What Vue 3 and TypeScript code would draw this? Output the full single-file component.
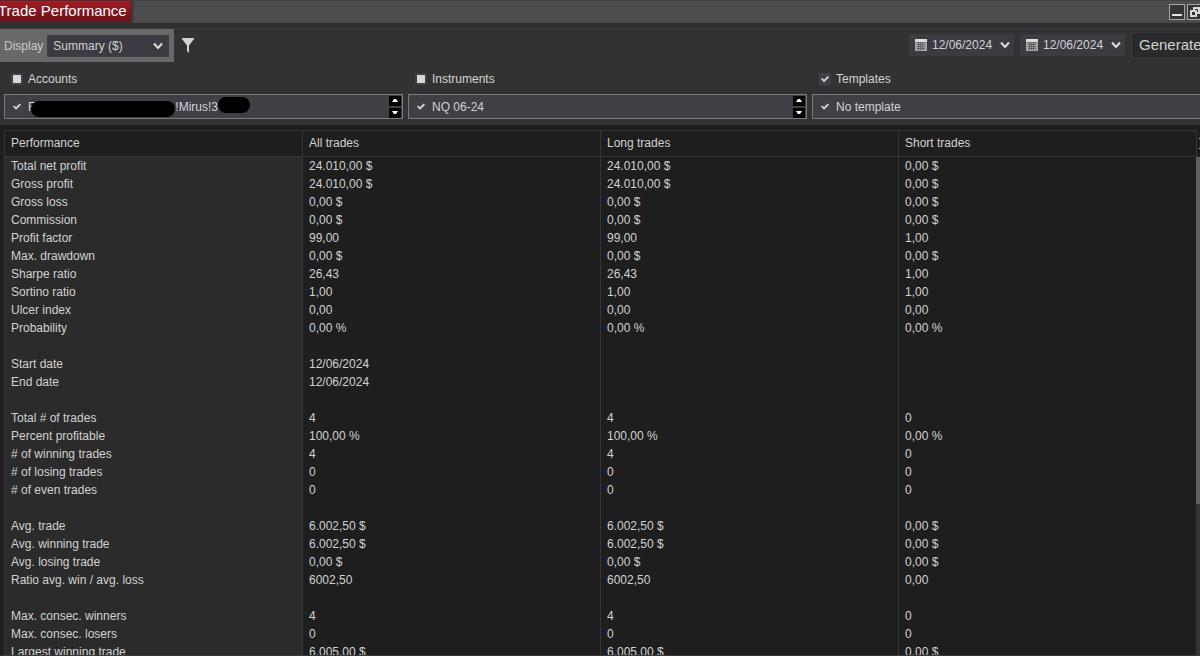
<script setup lang="ts">
import { ref } from 'vue'

interface Row {
  label: string
  all?: string
  long?: string
  short?: string
}

const display = ref('Summary ($)')
const dates = ref([
  { id: 'from', name: 'Start date', value: '12/06/2024' },
  { id: 'to', name: 'End date', value: '12/06/2024' },
])

const row = (label: string, all = '', long = '', short = ''): Row => ({ label, all, long, short })
const same = (label: string, value: string, short: string): Row => row(label, value, value, short)

const rows: Row[] = [
  same('Total net profit', '24.010,00 $', '0,00 $'),
  same('Gross profit', '24.010,00 $', '0,00 $'),
  same('Gross loss', '0,00 $', '0,00 $'),
  same('Commission', '0,00 $', '0,00 $'),
  same('Profit factor', '99,00', '1,00'),
  same('Max. drawdown', '0,00 $', '0,00 $'),
  same('Sharpe ratio', '26,43', '1,00'),
  same('Sortino ratio', '1,00', '1,00'),
  same('Ulcer index', '0,00', '0,00'),
  same('Probability', '0,00 %', '0,00 %'),
  row(''),
  row('Start date', '12/06/2024'),
  row('End date', '12/06/2024'),
  row(''),
  same('Total # of trades', '4', '0'),
  same('Percent profitable', '100,00 %', '0,00 %'),
  same('# of winning trades', '4', '0'),
  same('# of losing trades', '0', '0'),
  same('# of even trades', '0', '0'),
  row(''),
  same('Avg. trade', '6.002,50 $', '0,00 $'),
  same('Avg. winning trade', '6.002,50 $', '0,00 $'),
  same('Avg. losing trade', '0,00 $', '0,00 $'),
  same('Ratio avg. win / avg. loss', '6002,50', '0,00'),
  row(''),
  same('Max. consec. winners', '4', '0'),
  same('Max. consec. losers', '0', '0'),
  same('Largest winning trade', '6.005,00 $', '0,00 $'),
]
</script>

<template>
  <div class="window">
    <header class="titlebar">
      <h1 class="tab">Trade Performance</h1>
      <div class="window-buttons">
        <button type="button" aria-label="Minimize">
          <svg width="16" height="16" viewBox="0 0 16 16"><path d="M3 11h10" stroke="#e4e4e4" stroke-width="2" /></svg>
        </button>
        <button type="button" aria-label="Restore">
          <svg width="16" height="16" viewBox="0 0 16 16" fill="none" stroke="#d8d8d8" stroke-width="2">
            <path d="M7 7V4h5v5H9" /><rect x="4" y="7" width="5" height="5" />
          </svg>
        </button>
      </div>
    </header>

    <section class="controls">
      <div class="toolbar">
        <div class="display">
          <label for="display">Display</label>
          <div class="select">
            <select id="display" v-model="display">
              <option>Summary ($)</option>
            </select>
            <svg class="chevron" width="10" height="8" viewBox="0 0 10 8"><path d="M1 1.5 5 6 9 1.5" /></svg>
          </div>
        </div>
        <button class="filter" type="button" aria-label="Filter">
          <svg width="12" height="15" viewBox="0 0 12 15"><path d="M0 0h12v1L7 7.5V15L5 13V7.5L0 1z" fill="#d2d2d2" /></svg>
        </button>
        <div class="actions">
          <div v-for="date in dates" :key="date.id" class="date">
            <svg width="12" height="12" viewBox="0 0 12 12">
              <rect width="12" height="12" fill="#a2a29f" />
              <rect width="12" height="3" fill="#dededc" />
              <path d="M1 3.5h10M2 5.5h8M2 7.5h8M2 9.500h8M3.500 4v7M5.500 4v7M7.500 4v7" stroke="#46464c" stroke-opacity="0.6" />
            </svg>
            <input :id="date.id" v-model="date.value" type="text" :aria-label="date.name" />
            <button type="button" :aria-label="'Open ' + date.name">
              <svg class="chevron" width="10" height="8" viewBox="0 0 10 8"><path d="M1 1.5 5 6 9 1.5" /></svg>
            </button>
          </div>
          <button class="generate" type="button">Generate</button>
        </div>
      </div>

      <div class="filters">
        <div class="group">
          <label class="option"><input type="checkbox" class="partial" />Accounts</label>
          <div class="list">
            <label class="option">
              <input type="checkbox" checked />
              <span class="account">F<i class="redacted wide"></i>!Mirus!3<i class="redacted"></i></span>
            </label>
            <div class="stepper">
              <button type="button" aria-label="Previous account"><svg width="6" height="3" viewBox="0 0 6 3"><path d="M0 3 2 0h2l2 3z" fill="#fff" /></svg></button>
              <button type="button" aria-label="Next account"><svg width="6" height="3" viewBox="0 0 6 3"><path d="M0 0h6L4 3H2z" fill="#fff" /></svg></button>
            </div>
          </div>
        </div>
        <div class="group">
          <label class="option"><input type="checkbox" class="partial" />Instruments</label>
          <div class="list">
            <label class="option"><input type="checkbox" checked />NQ 06-24</label>
            <div class="stepper">
              <button type="button" aria-label="Previous instrument"><svg width="6" height="3" viewBox="0 0 6 3"><path d="M0 3 2 0h2l2 3z" fill="#fff" /></svg></button>
              <button type="button" aria-label="Next instrument"><svg width="6" height="3" viewBox="0 0 6 3"><path d="M0 0h6L4 3H2z" fill="#fff" /></svg></button>
            </div>
          </div>
        </div>
        <div class="group">
          <label class="option"><input type="checkbox" checked />Templates</label>
          <div class="list">
            <label class="option"><input type="checkbox" checked />No template</label>
          </div>
        </div>
      </div>
    </section>

    <main class="report">
      <table>
        <thead>
          <tr>
            <th scope="col">Performance</th>
            <th scope="col">All trades</th>
            <th scope="col">Long trades</th>
            <th scope="col">Short trades</th>
          </tr>
        </thead>
        <tbody>
          <tr v-for="(item, index) in rows" :key="index">
            <th scope="row">{{ item.label }}</th>
            <td>{{ item.all }}</td>
            <td>{{ item.long }}</td>
            <td>{{ item.short }}</td>
          </tr>
        </tbody>
      </table>
      <div class="scrollbar">
        <div class="scroll-head"><i></i><i></i></div>
        <div class="thumb"></div>
      </div>
    </main>
  </div>
</template>

<style>
body {
  background: #1e1e1e;
  overflow: hidden;
}
</style>

<style scoped>
* {
  box-sizing: border-box;
}
.window {
  display: flex;
  flex-direction: column;
  height: 100vh;
  overflow: hidden;
  border-bottom: 1px solid #3a3a3b;
  background: #1e1e1e;
  color: #d2d2d2;
  font: 12px/18px "Liberation Sans", Arial, sans-serif;
}
button,
input,
select {
  margin: 0;
  padding: 0;
  border: 0;
  border-radius: 0;
  background: none;
  color: inherit;
  font: inherit;
}
svg {
  display: block;
  flex: none;
}
.titlebar {
  display: flex;
  justify-content: space-between;
  flex: none;
  height: 23px;
  border-top: 1px solid #42424a;
  border-bottom: 1px solid #444446;
  background: #4d4d4d;
}
.tab {
  margin: 0 0 0 -2px;
  padding: 0 4px 0 0;
  height: 21px;
  background: linear-gradient(#a51c26, #7c141c 60%, #6d1219);
  box-shadow: 1px 0 3px #222;
  color: #fff;
  font-size: 15px;
  font-weight: 400;
  line-height: 20px;
}
.window-buttons {
  display: flex;
  gap: 2px;
  margin: 3px -3px 0 0;
}
.window-buttons button {
  width: 16px;
  height: 16px;
  background: #353538;
  box-shadow: inset 0 0 0 1px #a5a5a5;
}
.controls {
  flex: none;
  padding-top: 5px;
  padding-bottom: 5px;
  border-bottom: 1px solid #3a3a3a;
  background: #323232;
  box-shadow: inset 0 5px #303033, inset 0 6px #3a3a41;
}
.toolbar {
  display: flex;
  align-items: center;
  height: 34px;
}
.display {
  display: flex;
  align-items: center;
  gap: 4px;
  align-self: stretch;
  padding: 0 5px 0 4px;
  margin-top: 1px;
  background: #686868;
  color: #cacaca;
}
.select {
  position: relative;
  color: #d2d2d2;
}
.select select {
  display: block;
  width: 122px;
  height: 22px;
  padding-left: 6px;
  appearance: none;
  background: #3c3b42;
}
.select .chevron {
  position: absolute;
  top: 7px;
  right: 6px;
  pointer-events: none;
}
.chevron {
  fill: none;
  stroke: #dcdcdc;
  stroke-width: 2;
}
.filter {
  margin-left: 8px;
}
.actions {
  display: flex;
  align-items: center;
  gap: 6px;
  margin-left: auto;
  margin-right: -8px;
}
.date {
  display: flex;
  align-items: center;
  width: 105px;
  height: 22px;
  padding: 0 4px 0 6px;
  gap: 5px;
  background: #3c3b42;
}
.date input {
  flex: 1;
  min-width: 0;
}
.generate {
  height: 27px;
  width: 77px;
  padding-left: 7px;
  border: 1px solid #38383d;
  background: #2a2a2c;
  font-size: 15px;
  text-align: left;
}
.filters {
  display: grid;
  grid-template-columns: repeat(3, 1fr);
  gap: 5px;
  margin: 8px -11px 0 4px;
}
.option {
  display: flex;
  align-items: center;
  gap: 5px;
  padding-left: 7px;
}
.option input {
  display: grid;
  place-items: center;
  width: 12px;
  height: 12px;
  appearance: none;
  background: #414047;
}
.option input::before {
  content: "";
  width: 8px;
  height: 8px;
  background: #d8d8d8;
  clip-path: polygon(0 50%, 16% 36%, 38% 58%, 84% 12%, 100% 28%, 38% 92%);
}
.option .partial::before {
  clip-path: none;
}
.list {
  display: flex;
  align-items: center;
  justify-content: space-between;
  height: 25px;
  margin-top: 6px;
  padding-right: 1px;
  border: 1px solid #7b7b7e;
  background: #403f46;
}
.list .option {
  padding-left: 6px;
}
.account {
  display: flex;
  align-items: center;
  height: 20px;
}
.redacted {
  align-self: flex-start;
  width: 32px;
  height: 16px;
  border-radius: 8px;
  background: #000;
}
.redacted.wide {
  z-index: 1;
  align-self: flex-end;
  width: 144px;
  margin-left: -4px;
}
.stepper {
  display: grid;
  gap: 2px;
}
.stepper button {
  display: grid;
  place-items: center;
  width: 12px;
  height: 10px;
  background: #000;
}
.report {
  display: flex;
  flex: 1;
  min-height: 0;
  padding: 5px 0 0 4px;
}
table {
  flex: 1;
  width: 100%;
  min-width: 0;
  align-self: flex-start;
  table-layout: fixed;
  border-spacing: 0;
}
th,
td {
  height: 18px;
  padding: 0 0 0 6px;
  border-left: 1px solid #353535;
  font-weight: 400;
  text-align: left;
}
thead th {
  height: 27px;
  padding-bottom: 2px;
  border-top: 1px solid #353535;
  border-bottom: 1px solid #353535;
}
tbody th {
  background: #2b2b2b;
}
.scrollbar {
  display: flex;
  flex-direction: column;
  flex: none;
  width: 4px;
  background: #333;
}
.scroll-head {
  display: grid;
  flex: none;
  align-content: center;
  justify-items: end;
  gap: 9px;
  height: 27px;
  border-left: 1px solid #353535;
  background: #1e1e1e;
}
.scroll-head i {
  width: 1px;
  height: 1px;
  background: #bbb;
}
.thumb {
  height: 66%;
  background: #606060;
}
</style>
